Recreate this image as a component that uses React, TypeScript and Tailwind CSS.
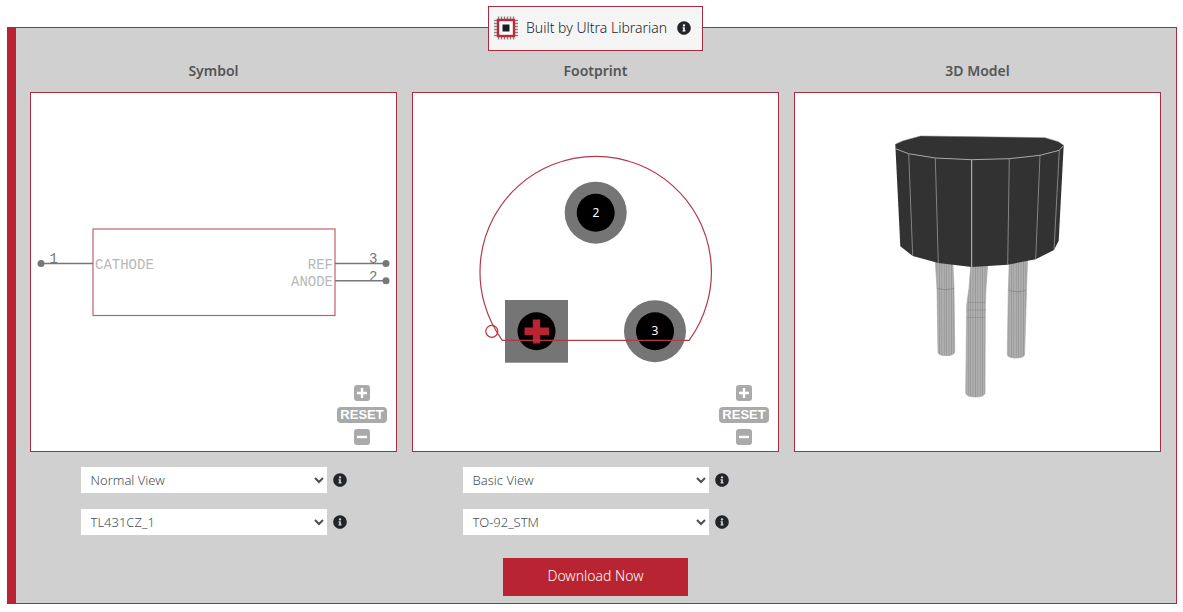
import { useState } from 'react';
import type { ReactNode } from 'react';
import { FaInfoCircle } from 'react-icons/fa';

const chipPins = [5, 8, 11, 14, 17, 20];

function ChipIcon() {
  return (
    <svg className="w-6 h-6 shrink-0" viewBox="0 0 24 24" aria-hidden="true">
      {chipPins.map((p) => (
        <g key={p} stroke="#8a8080" strokeWidth="1.4">
          <path d={`M${p - 0.5} 0.5V23.5`} />
          <path d={`M0 ${p - 0.5}H24`} />
        </g>
      ))}
      <rect x="4" y="4" width="16" height="16" fill="#fff" stroke="#c0283a" strokeWidth="2.4" />
      <rect x="8.5" y="8.5" width="7" height="7" fill="#1d1d1f" />
    </svg>
  );
}

interface InfoButtonProps {
  label: string;
}

function InfoButton({ label }: InfoButtonProps) {
  return (
    <button type="button" aria-label={label} className="shrink-0 text-[#212529]">
      <FaInfoCircle className="w-[14px] h-[14px]" />
    </button>
  );
}

function ZoomControls() {
  return (
    <div className="absolute right-[9px] bottom-[6px] flex flex-col items-center gap-[6px] text-white">
      <button type="button" aria-label="Zoom in" className="w-4 h-4 rounded-[3px] bg-[#aaaaaa]">
        <svg viewBox="0 0 16 16" stroke="currentColor" strokeWidth="2.4">
          <path d="M8 3V13M3 8H13" />
        </svg>
      </button>
      <button
        type="button"
        className="w-[50px] h-4 rounded-[4px] bg-[#aaaaaa] text-[13px] leading-4 font-bold font-['Liberation_Sans',sans-serif]"
      >
        RESET
      </button>
      <button type="button" aria-label="Zoom out" className="w-4 h-4 rounded-[3px] bg-[#aaaaaa]">
        <svg viewBox="0 0 16 16" stroke="currentColor" strokeWidth="2.4">
          <path d="M3 8H13" />
        </svg>
      </button>
    </div>
  );
}

function SymbolDrawing() {
  return (
    <svg
      className="w-full h-full font-['Liberation_Mono',monospace] text-[14px]"
      viewBox="0 0 365 358"
      role="img"
      aria-label="Schematic symbol"
    >
      <rect x="62" y="136" width="242" height="86.5" fill="none" stroke="#c4606c" strokeWidth="1.2" />
      <g stroke="#777" strokeWidth="1.4">
        <path d="M10 170.5H62" />
        <path d="M304 170.5H355" />
        <path d="M304 187.8H355" />
      </g>
      <g fill="#777">
        <circle cx="10" cy="170.5" r="3.5" />
        <circle cx="355" cy="170.5" r="3.5" />
        <circle cx="355" cy="187.8" r="3.5" />
        <text x="18.5" y="170">1</text>
        <text x="338" y="170">3</text>
        <text x="338" y="188">2</text>
      </g>
      <g fill="#b8b8b8">
        <text x="64" y="176">CATHODE</text>
        <text x="302" y="176" textAnchor="end">REF</text>
        <text x="302" y="193" textAnchor="end">ANODE</text>
      </g>
    </svg>
  );
}

function FootprintDrawing() {
  return (
    <svg
      className="w-full h-full font-['Noto_Sans',sans-serif] text-[12px]"
      viewBox="0 0 365 358"
      role="img"
      aria-label="PCB footprint"
    >
      <g fill="#757575">
        <circle cx="182.7" cy="119.7" r="31" />
        <rect x="92" y="207" width="63" height="62.7" />
        <circle cx="242" cy="238.2" r="31" />
      </g>
      <g fill="#000">
        <circle cx="182.7" cy="119.7" r="19" />
        <circle cx="123.5" cy="238.2" r="19" />
        <circle cx="242" cy="238.2" r="19" />
      </g>
      <path d="M123.5 226.5V250.5M111.5 238.2H136" stroke="#b92432" strokeWidth="7.4" />
      <g fill="none" stroke="#b3384a" strokeWidth="1.2">
        <path d="M89.3 247.3A115.7 115.7 0 1 1 276.1 247.3Z" />
        <circle cx="78.8" cy="238.3" r="6" />
      </g>
      <g fill="#fff" textAnchor="middle">
        <text x="183" y="124">2</text>
        <text x="242" y="242">3</text>
      </g>
    </svg>
  );
}

function ModelDrawing() {
  return (
    <svg className="w-full h-full" viewBox="0 0 365 358" role="img" aria-label="3D package model">
      <defs>
        <pattern id="wire" width="2.4" height="10" patternUnits="userSpaceOnUse">
          <rect width="2.4" height="10" fill="#b0b0b0" />
          <rect width="0.8" height="10" fill="#969696" />
        </pattern>
      </defs>
      {/* Leads */}
      <g fill="url(#wire)" stroke="#a0a0a0" strokeWidth="0.6">
        <path d="M140.3 168L142 196L143 259.5Q144 262.7 151.5 262.7Q159 262.5 159.8 259L159 196L157.8 168Z" />
        <path d="M214.3 168L213.3 198L212.3 262Q213.5 265 221 265Q228.5 265 229.5 262L231.5 198L232.5 168Z" />
        <path d="M176 170L174 195L171.7 212L170.7 300.5Q172.5 304 180.5 304Q188.5 304 190 300.5L190.3 212L191 195L192.8 170Z" />
      </g>
      <g fill="none" stroke="#858585" strokeWidth="0.8">
        <path d="M142 195.5Q150 198 159 195.5" />
        <path d="M213.5 197Q222 200.5 231 197" />
        <path d="M173 209.5H190.5M172 217H190.5M172 224.5H190" strokeWidth="0.5" />
      </g>
      {/* Body */}
      <path
        d="M100.3 51.3L108.3 47.7L125.7 43L250 44.7L263.3 48.7L268.7 52.3L263.7 147.7L259 157L240.7 166.3L212.7 171.7L176.7 174L143.3 170L117.7 163L105.3 153.3Z"
        fill="#323232"
      />
      <path
        d="M100.3 51.3L108.3 47.7L125.7 43L250 44.7L263.3 48.7L268.7 52.3"
        fill="none"
        stroke="#777"
        strokeWidth="0.5"
      />
      <g fill="none" stroke="#a8a8a8" strokeWidth="1">
        <path d="M100.3 55.7L113.7 60.7L140.3 65L176.7 66.7L214.3 65.7L245 62.3L264.3 57.3L268.7 52.3" />
        <path d="M176.7 66.7V174" stroke="#c4c4c4" />
        <path
          d="M113.7 60.7L117.7 163M140.3 65L143.3 170M214.3 65.7L212.7 171.7M245 62.3L240.7 166.3M264.3 57.3L259 157"
          strokeWidth="0.7"
        />
      </g>
    </svg>
  );
}

interface ViewSelectProps {
  label: string;
  options: string[];
}

function ViewSelect({ label, options }: ViewSelectProps) {
  const [value, setValue] = useState(options[0]);

  return (
    <div className="flex items-center gap-[6px]">
      <select
        aria-label={label}
        value={value}
        onChange={(e) => setValue(e.target.value)}
        className="flex-1 min-w-0 h-[26px] pl-[6px] bg-white text-[#495057] text-[13px] font-light"
      >
        {options.map((option) => (
          <option key={option}>{option}</option>
        ))}
      </select>
      <InfoButton label={`About ${label}`} />
    </div>
  );
}

interface PreviewColumnProps {
  title: string;
  drawing: ReactNode;
  zoomable?: boolean;
  children?: ReactNode;
}

function PreviewColumn({ title, drawing, zoomable = false, children }: PreviewColumnProps) {
  return (
    <div>
      <h2 className="mb-[11px] text-center text-[14px] leading-5 font-semibold text-[#555]">{title}</h2>
      <div className="relative h-[360px] bg-white border border-[#a72c40]">
        {drawing}
        {zoomable && <ZoomControls />}
      </div>
      {children && (
        <div className="w-[266px] max-w-full mx-auto mt-[15px] flex flex-col gap-4">{children}</div>
      )}
    </div>
  );
}

export default function App() {
  return (
    <main className="bg-white pt-[27px] pl-[7px] pr-[6px] pb-2 font-['Noto_Sans',sans-serif]">
      <section className="bg-[#d0d0d0] border border-l-[9px] border-[#a72c40] border-l-[#b92432] pl-[14px] pr-[15px] pb-[7px]">
        {/* Badge straddles the top border */}
        <div className="w-[215px] h-[45px] -mt-[22px] mx-auto px-[5px] pb-[2px] flex items-center bg-[#f5f5f5] border border-[#a72c40]">
          <ChipIcon />
          <span className="ml-2 flex-1 whitespace-nowrap text-[14px] font-light text-[#212529]">
            Built by Ultra Librarian
          </span>
          <div className="flex mr-[6px]">
            <InfoButton label="About Ultra Librarian" />
          </div>
        </div>

        <div className="mt-[10px] grid grid-cols-3 gap-[15px]">
          <PreviewColumn title="Symbol" drawing={<SymbolDrawing />} zoomable>
            <ViewSelect label="Symbol view" options={['Normal View']} />
            <ViewSelect label="Symbol name" options={['TL431CZ_1']} />
          </PreviewColumn>
          <PreviewColumn title="Footprint" drawing={<FootprintDrawing />} zoomable>
            <ViewSelect label="Footprint view" options={['Basic View']} />
            <ViewSelect label="Footprint name" options={['TO-92_STM']} />
          </PreviewColumn>
          <PreviewColumn title="3D Model" drawing={<ModelDrawing />} />
        </div>

        <div className="mt-[23px] flex justify-center">
          <button type="button" className="w-[185px] h-[38px] pb-[3px] bg-[#b92432] text-white text-[14px] font-light">
            Download Now
          </button>
        </div>
      </section>
    </main>
  );
}
